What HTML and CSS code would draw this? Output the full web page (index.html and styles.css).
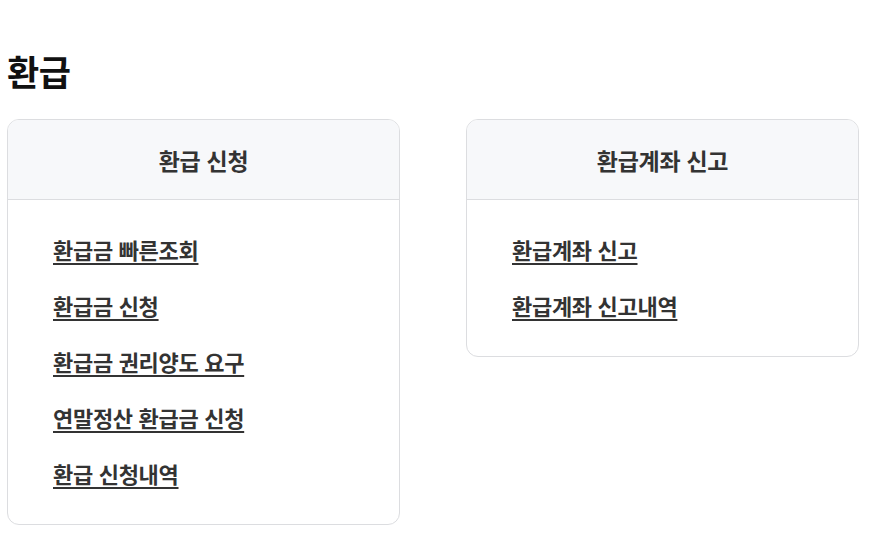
FILE: index.html
```html
<!DOCTYPE html>
<html lang="ko">
<head>
    <meta charset="utf-8">
    <title>환급</title>
    <meta name="viewport" content="width=device-width, initial-scale=1.0">
    <link rel="stylesheet" href="styles.css">
</head>
<body>
    <h1 class="page-title">환급</h1>
    <div class="menu-grid">
        <section class="menu-card">
            <h2 class="menu-card-title">환급 신청</h2>
            <ul class="menu-links">
                <li><a href="#">환급금 빠른조회</a></li>
                <li><a href="#">환급금 신청</a></li>
                <li><a href="#">환급금 권리양도 요구</a></li>
                <li><a href="#">연말정산 환급금 신청</a></li>
                <li><a href="#">환급 신청내역</a></li>
            </ul>
        </section>
        <section class="menu-card">
            <h2 class="menu-card-title">환급계좌 신고</h2>
            <ul class="menu-links">
                <li><a href="#">환급계좌 신고</a></li>
                <li><a href="#">환급계좌 신고내역</a></li>
            </ul>
        </section>
    </div>
</body>
</html>
```

FILE: styles.css
```css
/* Refund menu page */
body {
    margin: 0;
    padding: 0 7px;
    background: #fff;
    color: #333;
    font-family: "Noto Sans CJK KR", "Noto Sans", sans-serif;
}

.page-title {
    margin: 44px 0 0;
    font-size: 35px;
    font-weight: 700;
    line-height: 54px;
    color: #111;
    letter-spacing: -0.5px;
}

.menu-grid {
    display: grid;
    grid-template-columns: 393px 393px;
    column-gap: 66px;
    align-items: start;
    margin-top: 21px;
}

.menu-card {
    border: 1px solid #dcdde0;
    border-radius: 12px;
    overflow: hidden;
    background: #fff;
}

.menu-card-title {
    margin: 0;
    height: 79px;
    display: flex;
    align-items: center;
    justify-content: center;
    background: #f7f8fa;
    border-bottom: 1px solid #dcdde0;
    font-size: 23px;
    font-weight: 700;
    color: #333;
    letter-spacing: -0.3px;
}

.menu-links {
    list-style: none;
    margin: 0;
    padding: 21px 0 23px 45px;
}

.menu-links li {
    height: 56px;
    display: flex;
    align-items: center;
}

.menu-links a {
    font-size: 22px;
    font-weight: 700;
    color: #333;
    letter-spacing: -0.3px;
    text-decoration: underline;
    text-underline-offset: 4px;
    text-decoration-thickness: 2px;
}
```
